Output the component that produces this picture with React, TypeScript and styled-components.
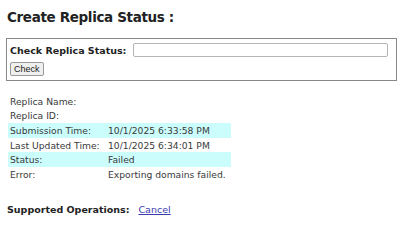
import styled, { createGlobalStyle } from "styled-components";

const Global = createGlobalStyle`
  body {
    margin: 0;
    background: #fff;
    font-family: "DejaVu Sans", Verdana, sans-serif;
    color: #333;
  }
`;

const Page = styled.div`
  width: 410px;
  height: 228px;
  padding: 9px 6px 0 7px;
  box-sizing: border-box;
`;

const Title = styled.h1`
  margin: 0 0 12px 0;
  font-size: 13.5px;
  letter-spacing: -0.35px;
  font-weight: bold;
  color: #222;
  line-height: 17px;
`;

const CheckBox = styled.div`
  width: 391px;
  height: 43px;
  box-sizing: border-box;
  border: 1px solid #888;
  margin-left: -1px;
  padding: 4px 3px;
  display: flex;
  flex-direction: column;
  gap: 5px;
`;

const CheckRow = styled.div`
  display: flex;
  align-items: center;
  gap: 7px;
`;

const FieldLabel = styled.label`
  font-size: 9.5px;
  font-weight: bold;
  color: #222;
`;

const TextInput = styled.input`
  width: 255px;
  height: 14px;
  box-sizing: border-box;
  border: 1px solid #b5b5b5;
  border-radius: 2px;
  padding: 0;
`;

const Button = styled.button`
  align-self: flex-start;
  height: 15px;
  padding: 0 3px;
  font-family: "Liberation Sans", Arial, sans-serif;
  font-size: 9px;
  color: #222;
  background: #efefef;
  border: 1px solid #999;
  border-radius: 2px;
`;

const Details = styled.div`
  margin-top: 13px;
  width: 223px;
  margin-left: 1px;
  display: flex;
  flex-direction: column;
`;

const Row = styled.div<{ $hl?: boolean }>`
  display: grid;
  grid-template-columns: 98px 1fr;
  height: 14.6px;
  align-items: center;
  font-size: 9.2px;
  padding-left: 2px;
  background: ${(p) => (p.$hl ? "#ccfdfd" : "transparent")};
  color: #3a3a3a;
  white-space: nowrap;
`;

const Ops = styled.div`
  margin-top: 22px;
  display: flex;
  align-items: center;
  gap: 9px;
  font-size: 9.5px;
`;

const OpsLabel = styled.span`
  font-weight: bold;
  color: #222;
`;

const Link = styled.a`
  color: #3b3bb0;
  text-decoration: underline;
`;

const rows: [string, string, boolean][] = [
  ["Replica Name:", "", false],
  ["Replica ID:", "", false],
  ["Submission Time:", "10/1/2025 6:33:58 PM", true],
  ["Last Updated Time:", "10/1/2025 6:34:01 PM", false],
  ["Status:", "Failed", true],
  ["Error:", "Exporting domains failed.", false],
];

export default function App() {
  return (
    <Page>
      <Global />
      <Title>Create Replica Status :</Title>
      <CheckBox>
        <CheckRow>
          <FieldLabel>Check Replica Status:</FieldLabel>
          <TextInput />
        </CheckRow>
        <Button>Check</Button>
      </CheckBox>
      <Details>
        {rows.map(([k, v, hl]) => (
          <Row key={k} $hl={hl}>
            <span>{k}</span>
            <span>{v}</span>
          </Row>
        ))}
      </Details>
      <Ops>
        <OpsLabel>Supported Operations:</OpsLabel>
        <Link href="#">Cancel</Link>
      </Ops>
    </Page>
  );
}
